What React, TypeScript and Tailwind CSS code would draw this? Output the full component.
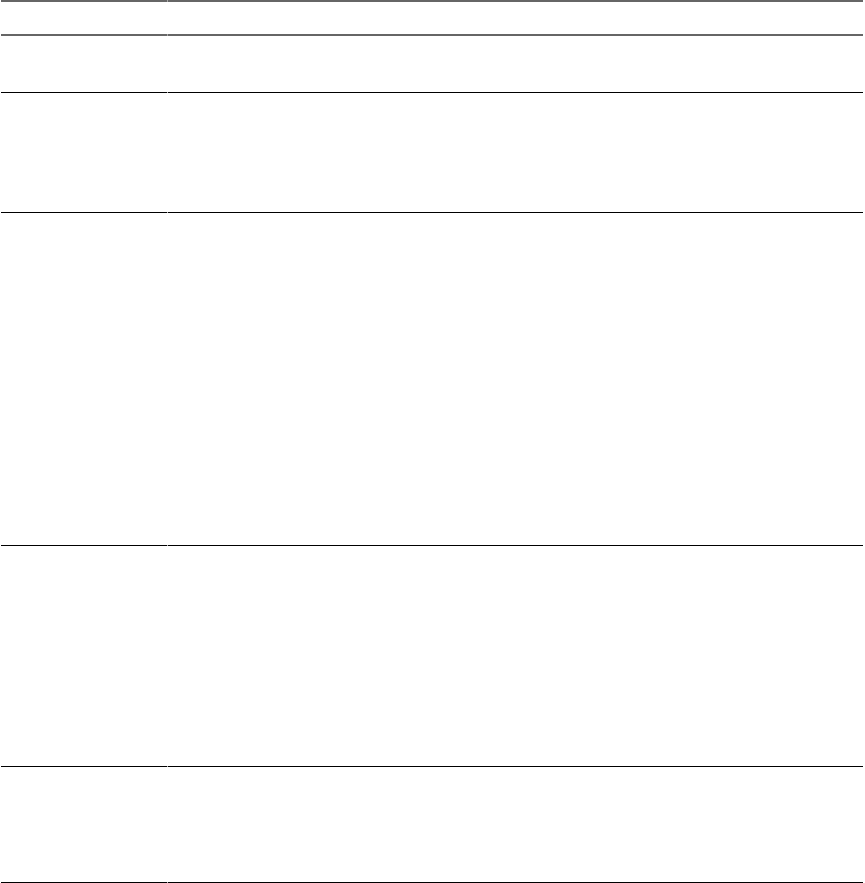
const rows = [56, 119, 332, 220, 115];

const Row = ({ h }: { h: number }) => (
  <div className="grid grid-cols-[166px_1px_1fr]">
    <div className="border-b border-black" style={{ height: h + 1 }} />
    <div className="border-b border-[#b0b0b0]" style={{ height: h + 1 }} />
    <div className="border-b border-black" style={{ height: h + 1 }} />
  </div>
);

export default function App() {
  return (
    <div className="bg-white min-h-[883px] font-['Liberation_Sans',sans-serif]">
      <div className="ml-px w-[862px] flex flex-col">
        <div className="grid grid-cols-[166px_1px_1fr]">
          <div className="h-9 border-y-2 border-[#666666]" />
          <div className="h-9 border-y-2 border-[#a8a8a8]" />
          <div className="h-9 border-y-2 border-[#666666]" />
        </div>
        {rows.map((h, i) => (
          <Row key={i} h={h} />
        ))}
      </div>
    </div>
  );
}
